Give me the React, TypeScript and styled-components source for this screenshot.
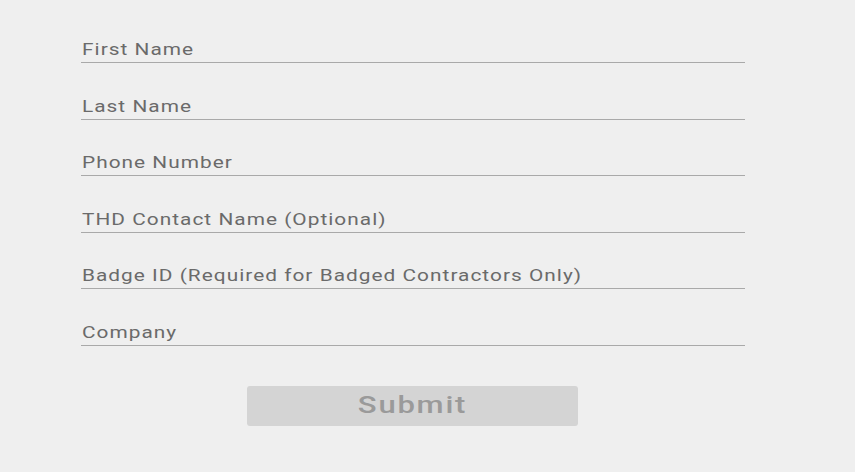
import React from "react";
import styled, { createGlobalStyle } from "styled-components";

const Global = createGlobalStyle`
  html, body { margin: 0; padding: 0; background: #efefef; }
  body { font-family: Roboto, "Noto Sans", Arial, sans-serif; }
`;

const Page = styled.div`
  width: 855px;
  height: 472px;
  background: #efefef;
  overflow: hidden;
`;

const Form = styled.form`
  width: 664px;
  margin-left: 81px;
  padding-top: 6.4px;
  display: flex;
  flex-direction: column;
`;

const Field = styled.label`
  box-sizing: border-box;
  height: 56.6px;
  display: flex;
  align-items: flex-end;
  padding: 0 0 3px 1px;
  border-bottom: 1px solid #a9a9a9;
`;

const Label = styled.span`
  display: inline-block;
  font-size: 16px;
  line-height: 19px;
  color: #6a6a6a;
  letter-spacing: 0.8px;
  white-space: nowrap;
  transform: scaleX(1.3);
  transform-origin: left center;
`;

const Actions = styled.div`
  display: flex;
  padding-top: 40px;
  padding-left: 166px;
`;

const Button = styled.button`
  width: 331px;
  height: 40px;
  border: none;
  border-radius: 3px;
  background: #d4d4d4;
  padding: 0;
  display: flex;
  align-items: center;
  justify-content: center;
`;

const ButtonText = styled.span`
  display: inline-block;
  color: #9a9a9a;
  font-family: Roboto, Arial, sans-serif;
  font-size: 23px;
  font-weight: 500;
  letter-spacing: 1.3px;
  transform: scaleX(1.35);
`;

const fields = [
  "First Name",
  "Last Name",
  "Phone Number",
  "THD Contact Name (Optional)",
  "Badge ID (Required for Badged Contractors Only)",
  "Company",
];

export default function App() {
  return (
    <Page>
      <Global />
      <Form onSubmit={(e) => e.preventDefault()}>
        {fields.map((f) => (
          <Field key={f}>
            <Label>{f}</Label>
          </Field>
        ))}
        <Actions>
          <Button type="submit" disabled>
            <ButtonText>Submit</ButtonText>
          </Button>
        </Actions>
      </Form>
    </Page>
  );
}
